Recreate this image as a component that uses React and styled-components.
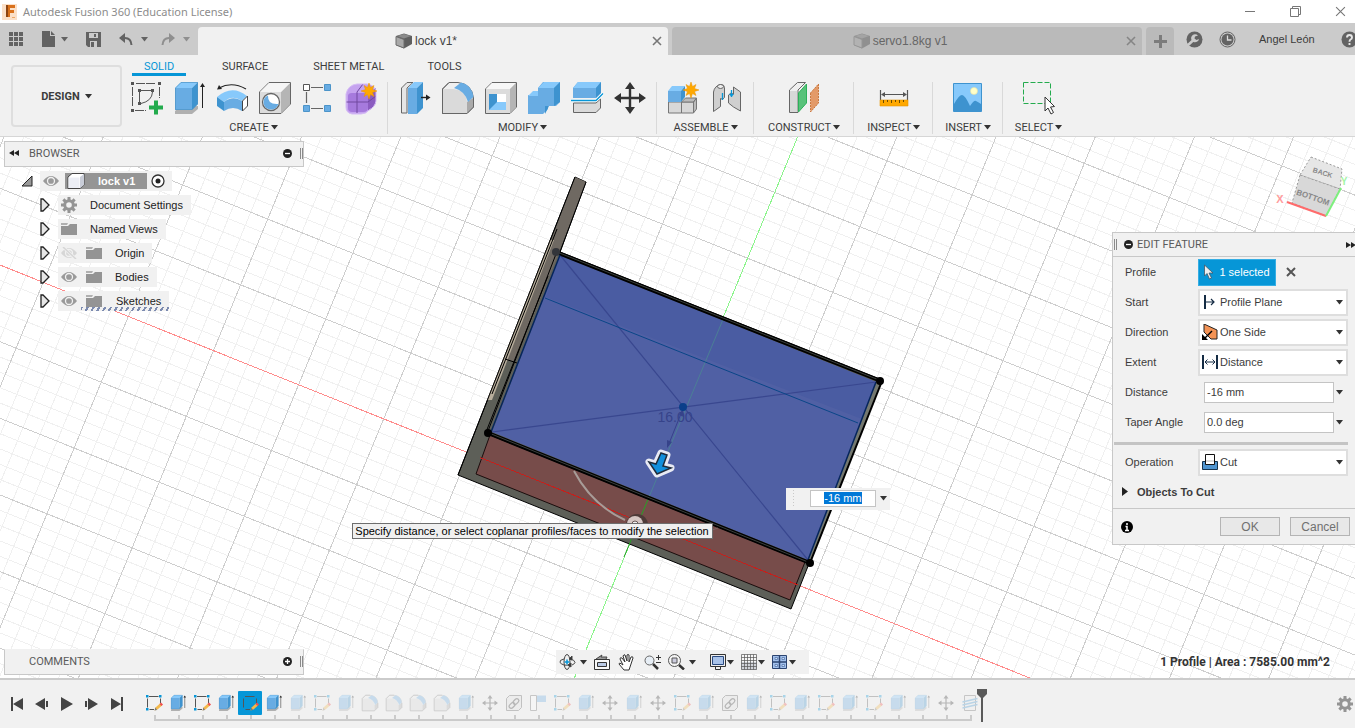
import { useEffect, useRef } from "react"
import styled, { createGlobalStyle } from "styled-components"

const GlobalStyle = createGlobalStyle`
    * {
        box-sizing: border-box;
    }
    body {
        margin: 0;
        overflow: hidden;
        font-family: "Liberation Sans", Arial, sans-serif;
        font-size: 11px;
        color: #3c3c3c;
    }
    button, input, select {
        font: inherit;
        color: inherit;
        margin: 0;
    }
    svg {
        display: block;
        flex: none;
    }
`

const Page = styled.div`
    height: 100vh;
    display: flex;
    flex-direction: column;
    background: #f1f1f1;
`

const PlainButton = styled.button`
    display: flex;
    align-items: center;
    justify-content: center;
    gap: ${(props) => props.$gap || 0}px;
    padding: 0;
    border: 0;
    background: none;
    cursor: pointer;
`

/* ---------- title bar ---------- */

const TitleBar = styled.header`
    height: 23px;
    flex: none;
    display: flex;
    align-items: center;
    gap: 6px;
    padding: 0 9px 0 2px;
    background: #fff;
    color: #8c8c8c;
    font-family: "Noto Sans", sans-serif;
    font-size: 11px;
`

const WindowButtons = styled.div`
    margin-left: auto;
    display: flex;
    align-items: center;
    gap: 34px;
`

/* ---------- document tabs ---------- */

const TabStrip = styled.div`
    height: 32px;
    flex: none;
    display: flex;
    align-items: stretch;
    gap: 4px;
    padding-top: 4px;
    background: #cbcbcb;
`

const QuickBar = styled.div`
    width: 194px;
    flex: none;
    display: flex;
    align-items: center;
    gap: 18px;
    padding: 0 0 4px 9px;
`

const UndoGroup = styled.div`
    display: flex;
    gap: 13px;
`

const DocTab = styled.div`
    flex: 1;
    display: flex;
    align-items: center;
    gap: 4px;
    padding: 0 6px;
    border-radius: 4px 4px 0 0;
    font-size: 12px;
    background: ${(props) => (props.$active ? "#f1f1f1" : "#bababa")};
    color: ${(props) => (props.$active ? "#444" : "#666")};
    > span {
        margin-left: -4px;
    }
    > :first-child {
        margin-left: auto;
    }
    > :last-child {
        margin-left: auto;
    }
`

const NewTab = styled(PlainButton)`
    width: 28px;
    border-radius: 4px 4px 0 0;
    background: #bababa;
`

const Account = styled.div`
    width: 177px;
    flex: none;
    display: flex;
    align-items: center;
    padding: 0 0 4px 8px;
    overflow: hidden;
    > * {
        flex: none;
    }
    > :nth-child(1) {
        margin: 0 16px 0 0;
        width: 17px;
    }
    > :nth-child(3) {
        margin: 0 26px 0 23px;
    }
`

/* ---------- ribbon ---------- */

const Ribbon = styled.div`
    height: 82px;
    flex: none;
    display: flex;
    border-bottom: 1px solid #d6d6d6;
    background: #f1f1f1;
    font-family: Roboto, sans-serif;
`

const Workspace = styled(PlainButton)`
    width: 111px;
    height: 62px;
    margin: 10px 7px 0 11px;
    border: 2px solid #dedede;
    border-radius: 4px;
    font-weight: 700;
`

const RibbonTabs = styled.nav`
    display: flex;
    height: 21px;
    padding-left: 3px;
    gap: 36px;
`

const RibbonTab = styled.button`
    height: 21px;
    min-width: ${(props) => (props.$active ? 54 : 34)}px;
    padding: 5px 0 0;
    border: 0;
    border-bottom: 3px solid ${(props) => (props.$active ? "#0696d7" : "transparent")};
    background: none;
    line-height: 13px;
    color: ${(props) => (props.$active ? "#0696d7" : "#3c3c3c")};
    &:nth-child(3) {
        margin-left: 9px;
    }
    &:nth-child(4) {
        margin-left: 7px;
    }
`

const RibbonGroups = styled.div`
    display: flex;
    margin-top: 6px;
`

const Group = styled.section`
    display: flex;
    flex-direction: column;
    align-items: center;
    justify-content: space-between;
    height: 52px;
    padding: 0 10px 0 11px;
    border-right: 1px solid #d9d9d9;
    &:first-child {
        padding-left: 1px;
    }
    &:last-child {
        border-right: 0;
    }
`

const GroupIcons = styled.div`
    display: flex;
    gap: 11px;
`

const GroupLabel = styled(PlainButton)`
    padding: 0 ${(props) => props.$inset}px;
    line-height: 13px;
`

/* ---------- viewport ---------- */

const Viewport = styled.main`
    flex: 1;
    min-height: 0;
    position: relative;
    display: flex;
    flex-direction: column;
    justify-content: space-between;
    background: #fff;
    overflow: hidden;
`

const Scene = styled.svg`
    position: absolute;
    inset: 0;
    width: 100%;
    height: 100%;
`

const Docks = styled.div`
    position: relative;
    display: flex;
    justify-content: space-between;
    align-items: flex-start;
    padding: 4px 0 0 4px;
`

const PanelBar = styled.div`
    width: 300px;
    height: 26px;
    display: flex;
    align-items: center;
    gap: 8px;
    padding: 0 0 2px 4px;
    border: 1px solid #c8c8c8;
    border-top-color: ${(props) => (props.$docked ? "#f1f1f1" : "#c8c8c8")};
    background: #f1f1f1;
    color: #5a5a5a;
    font-family: Roboto, sans-serif;
    > :nth-child(3) {
        margin-left: auto;
    }
`

const ArrowSlot = styled.span`
    width: 12px;
`

const Grip = styled.i`
    width: 3px;
    height: 11px;
    border: solid #8a8a8a;
    border-width: 0 1px;
`

const Tree = styled.ul`
    margin: 2px 0 0;
    padding: 0;
    list-style: none;
`

const TreeRow = styled.li`
    height: 24px;
    display: flex;
    align-items: center;
    gap: ${(props) => (props.$root ? 7 : 8)}px;
    padding-left: ${(props) => (props.$root ? 17 : 35)}px;
`

const TreeItem = styled.div`
    height: 20px;
    display: flex;
    align-items: center;
    padding-right: ${(props) => (props.$root ? 0 : 8)}px;
    background: #f1f1f1;
    color: #222;
    > button, > svg {
        width: 22px;
        margin-right: 3px;
    }
    > span {
        padding-left: 7px;
    }
`

const RootName = styled.span`
    height: 16px;
    width: 82px;
    display: flex;
    align-items: center;
    gap: 13px;
    background: #959595;
    color: #fff;
    font-weight: 700;
    ${TreeItem} > & {
        padding-left: 2px;
    }
`

const EditedName = styled.span`
    height: 20px;
    display: flex;
    align-items: center;
    gap: 14px;
    margin: 0 -8px 0 -2px;
    background: repeating-linear-gradient(120deg, #7c8bb0 0 2px, transparent 2px 5px) 0 100% / 100% 4px no-repeat;
    ${TreeItem} > & {
        padding: 0 8px 0 5px;
    }
`

/* ---------- edit feature ---------- */

const Dialog = styled.form`
    width: 243px;
    margin-top: 91px;
    border: solid #c8c8c8;
    border-width: 1px 0 1px 1px;
    background: #f1f1f1;
`

const DialogTitle = styled.div`
    height: 24px;
    display: flex;
    align-items: center;
    gap: 4px;
    padding-left: 1px;
    border-bottom: 1px solid #c8c8c8;
    font-family: Roboto, sans-serif;
    color: #5a5a5a;
    > :nth-child(2) {
        margin-left: 3px;
    }
    > :last-child {
        margin: 0 -1px 0 auto;
    }
`

const Field = styled.div`
    height: 30px;
    display: grid;
    grid-template-columns: 73px minmax(0, 1fr);
    align-items: center;
    padding: 0 7px 0 12px;
`

const SelectBox = styled.div`
    height: 27px;
    display: flex;
    align-items: center;
    gap: 2px;
    padding: 0 3px 0 2px;
    border: 2px solid #dedede;
    background: #fff;
    select {
        flex: 1;
        min-width: 0;
        padding: 0;
        border: 0;
        outline: 0;
        appearance: none;
        background: none;
    }
`

const ProfileBox = styled.div`
    display: flex;
    align-items: center;
    gap: 10px;
`

const Selected = styled(PlainButton)`
    width: 78px;
    height: 27px;
    border: 1px solid #35aee4;
    background: #0696d7;
    color: #fff;
`

const ValueBox = styled.div`
    display: flex;
    align-items: center;
    gap: 2px;
    padding: 0 5px 0 6px;
    input {
        flex: 1;
        min-width: 0;
        height: 21px;
        padding: 0 2px;
        border: 1px solid #c4c4c4;
        outline: 0;
        background: #fff;
    }
`

const Separator = styled.hr`
    height: 3px;
    margin: 5px 7px 2px 1px;
    border: 0;
    background: #c4c4c4;
`

const Expander = styled.button`
    height: 31px;
    display: flex;
    align-items: center;
    gap: 9px;
    padding: 0 9px 2px;
    border: 0;
    background: none;
    font-weight: 700;
`

const DialogFooter = styled.div`
    height: 36px;
    display: flex;
    align-items: center;
    gap: 10px;
    padding: 0 5px 0 8px;
    border-top: 1px solid #c8c8c8;
    svg {
        margin-right: auto;
    }
    button {
        width: 60px;
        height: 19px;
        padding: 0;
        border: 1px solid #b4b4b4;
        background: #e8e8e8;
        color: #707070;
        font-size: 12px;
        line-height: 16px;
    }
`

/* ---------- things floating over the model ---------- */

const DimensionBox = styled.div`
    position: absolute;
    left: 58%;
    top: 351px;
    width: 104px;
    height: 22px;
    display: flex;
    align-items: center;
    gap: 4px;
    padding: 0 3px 2px 6px;
    background: #f1f1f1;
    i {
        width: 4px;
        height: 18px;
        margin-right: 10px;
        background: radial-gradient(#c9c9c9 1px, transparent 1px) 0 0 / 3px 3px;
    }
    input {
        width: 66px;
        height: 17px;
        padding: 0;
        border: 1px solid #c4c4c4;
        outline: 0;
        background: #fff;
        text-align: center;
    }
    input::selection {
        background: #0078d7;
        color: #fff;
    }
`

const Hint = styled.div`
    position: absolute;
    left: 26%;
    top: 386px;
    padding: 0 3px 0 2px;
    border: 1px solid #6e6e6e;
    background: #f0f0f0;
    color: #000;
    font-size: 11px;
    line-height: 14px;
    white-space: nowrap;
`

const BottomDock = styled.div`
    position: relative;
    display: grid;
    grid-template-columns: 1fr auto 1fr;
    align-items: center;
    padding: 0 0 3px 4px;
`

const NavBar = styled.div`
    height: 24px;
    display: flex;
    align-items: center;
    margin-left: 6px;
    padding: 0 13px 0 3px;
    gap: 7px;
    background: #f1f1f1;
    > :nth-child(6) {
        margin-left: 6px;
    }
`

const Status = styled.output`
    padding-right: 25px;
    text-align: right;
    font-family: Roboto, sans-serif;
    font-size: 12px;
    font-weight: 700;
    color: #333;
`

/* ---------- timeline ---------- */

const Timeline = styled.footer`
    height: 50px;
    flex: none;
    display: flex;
    align-items: flex-start;
    border-top: 2px solid #cbcbcb;
    background: #f1f1f1;
`

const Transport = styled.div`
    width: 142px;
    flex: none;
    display: flex;
    gap: 9px;
    padding: 17px 0 0 9px;
`

const Track = styled.div`
    padding-top: 11px;
`

const Features = styled.ol`
    display: flex;
    margin: 0;
    padding: 0;
    list-style: none;
    li::after {
        content: "";
        display: block;
        width: 2px;
        height: 4px;
        margin-left: 12px;
        background: #cbcbcb;
    }
`

const Feature = styled(PlainButton)`
    width: 24px;
    height: 24px;
    border-radius: 1px;
    background: ${(props) => (props.$current ? "#0696d7" : "none")};
    svg {
        opacity: ${(props) => (props.$later ? 0.3 : 1)};
    }
`

const Rail = styled.div`
    height: 2px;
    margin: 0 10px 0 12px;
    background: #cbcbcb;
`

const Marker = styled.svg`
    margin: 9px 0 0 -6px;
`

const SettingsButton = styled(PlainButton)`
    margin: 16px 2px 0 auto;
`

/* ---------- small icons ---------- */

const Caret = ({ color = "#333" }) => (
    <svg width="7" height="5" viewBox="0 0 7 5">
        <path d="M0 0h7L3.5 4.5z" fill={color} />
    </svg>
)

const CloseX = ({ size = 10, color = "#777", width = 1.6 }) => (
    <svg width={size} height={size} viewBox="0 0 10 10">
        <path d="M1 1l8 8M9 1l-8 8" stroke={color} strokeWidth={width} />
    </svg>
)

const DocCube = ({ faded }) => (
    <svg width="20" height="16" viewBox="0 0 20 16" opacity={faded ? 0.45 : 1}>
        <path d="M1 3l8-2.500L17 3v8l-8 4.500L1 12z" fill="#5f5f5f" />
        <path d="M1 3.500l8 3v8.500L1 12z" fill="#a9a9a9" stroke="#6c6c6c" />
        <path d="M2 3l7-2 7 2-7 2.500z" fill="#8a8a8a" />
    </svg>
)

const Eye = ({ off }) => (
    <svg width="16" height="12" viewBox="0 0 16 12" opacity={off ? 0.3 : 1}>
        <path d="M0 6Q8-4 16 6Q8 16 0 6z" fill="#9a9a9a" />
        <circle cx="8" cy="6" r="3.500" fill="none" stroke="#f1f1f1" strokeWidth="1.300" />
        {off && <path d="M2 0l13 12" stroke="#f1f1f1" strokeWidth="3" />}
        {off && <path d="M2 0l13 12" stroke="#9a9a9a" strokeWidth="1.500" />}
    </svg>
)

const Folder = () => (
    <svg width="16" height="14" viewBox="0 0 16 14">
        <path d="M0 4h7l2-2h7v11H0z" fill="#949494" />
        <path d="M0 1h7L6 3H0z" fill="#b0b0b0" />
    </svg>
)

const Gear = ({ size = 16, color = "#949494" }) => (
    <svg width={size} height={size} viewBox="0 0 16 16">
        <circle cx="8" cy="8" r="4.300" fill="none" stroke={color} strokeWidth="3" />
        {[0, 45, 90, 135].map((a) => (
            <path key={a} d="M8 0v3.500M8 12.500V16" stroke={color} strokeWidth="3" transform={`rotate(${a} 8 8)`} />
        ))}
    </svg>
)

const Expand = () => (
    <svg width="11" height="14" viewBox="0 0 11 14">
        <path d="M2 1h2l6 6-6 6H2z" fill="#e6e6e6" stroke="#222" strokeWidth="1.300" />
    </svg>
)

const RoundSign = ({ plus }) => (
    <svg width="9" height="9" viewBox="0 0 9 9">
        <circle cx="4.500" cy="4.500" r="4.500" fill="#222" />
        <path d={plus ? "M2 4.500h5M4.500 2v5" : "M2 4.500h5"} stroke="#fff" strokeWidth="1.300" />
    </svg>
)

const DoubleArrow = ({ right }) => (
    <svg width="10" height="6" viewBox="0 0 10 6">
        <path
            d="M5 0v6L0 3zM10 0v6L5 3z"
            fill="#222"
            transform={right ? "rotate(180 5 3)" : undefined}
        />
    </svg>
)

/* ---------- command icons, drawn on a 32 grid ---------- */

const Star = ({ x, y }) => (
    <path
        transform={`translate(${x} ${y})`}
        fill="#ffa800"
        stroke="#e89200"
        strokeWidth=".5"
        d="M0-8l1.500 4.500L5-5.500 3.500-1.500 8 0 3.500 1.500 5 5.500 1.500 3.500 0 8l-1.500-4.500L-5 5.500l1.500-4L-8 0l4.500-1.500L-5-5.500l3.500 2z"
    />
)

const commands = {
    sketch: (
        <>
            <path d="M6 1.500h20M2.500 5v20M5 28.500h11M29.500 5v11" stroke="#555" strokeDasharray="9 1" fill="none" />
            <path d="M1 0h3v3H1zM28 0h3v3h-3zM1 27h3v3H1zM8 7h3v3H8zM21 7h3v3h-3zM8 20h3v3H8z" fill="#555" />
            <path d="M11 8.500h10M9.500 10v10M11 21.500Q22 19 22.500 10" stroke="#555" fill="none" />
            <path d="M19 25.500h14M26 18.500v14" stroke="#23ab4d" strokeWidth="4" />
        </>
    ),
    extrude: (
        <>
            <path d="M2 29l5-4 18-1v3l-6 5H2z" fill="#b0b0b0" />
            <path d="M2 6h17v22H2z" fill="#68ace3" />
            <path d="M2 6l6-6h17l-6 6z" fill="#87c9fb" />
            <path d="M19 6l6-6v22l-6 6z" fill="#3e93cf" />
            <path d="M2.500 6l5.500-5.500h16.500V22L19 27.500H2.500z" fill="none" stroke="#4f93c4" strokeWidth=".7" />
            <path d="M29.500 3v23" stroke="#222" />
            <path d="M27 5l2.500-4L32 5z" fill="#222" />
        </>
    ),
    revolve: (
        <>
            <path d="M1 15Q16 2 31 14l-5 5Q16 12 8 20z" fill="#87c9fb" />
            <path d="M1 15l7 5v9l-7-5z" fill="#3e93cf" />
            <path d="M8 20q9-7 18-1v10q-9-6-18 0z" fill="#68ace3" />
            <path d="M26.500 19l5-5v10l-5 5z" fill="#fff" stroke="#444" />
            <path d="M3 6Q16-1 30 7" stroke="#222" strokeWidth="1.200" fill="none" />
            <path d="M1 7.500l2-4.500 3 4z" fill="#222" />
        </>
    ),
    hole: (
        <>
            <path d="M.5 10L10 .5h21.500V22L22 31.500H.5z" fill="#dcdcdc" stroke="#666" />
            <path d="M22 10l9-9v21l-9 9z" fill="#b5b5b5" />
            <path d="M1 10h21l9-9H10z" fill="#f5f5f5" />
            <circle cx="12" cy="20" r="8.500" fill="#fff" stroke="#666" strokeWidth="1.300" />
            <path d="M9 13.500q-5 2-4.500 7.500 1 6 7.500 6.500 5.500 0 7.500-5.500-11 1-10.500-8.500z" fill="#68ace3" />
        </>
    ),
    pattern: (
        <>
            <path d="M9 5.500h12M4.500 10v11M9 26.500h12" stroke="#666" strokeWidth="1.200" />
            <path d="M1.500 2.500h6v6h-6z" fill="#fff" stroke="#555" />
            <path d="M22.500 2.500h6v6h-6zM1.500 23.500h6v6h-6zM22.500 23.500h6v6h-6z" fill="#68ace3" stroke="#4c94c9" />
        </>
    ),
    form: (
        <>
            <path d="M1 12Q3 3 12 2h10q8 1 9 8v9q-1 6-7 9-3 4-8 4H7q-6-1-6-7z" fill="#c5a3ef" />
            <path d="M23 11q5-2 8-5v14q-1 5-8 9z" fill="#8b5cc0" />
            <path d="M3 14q0-3 4-3h12q4 0 4 4v11q0 4-5 4H7q-4 0-4-4z" fill="#a67add" />
            <path d="M12 10v21M1 20h22l8-6M12 10l6-8" stroke="#70489f" fill="none" />
            <path d="M1 12Q3 3 12 2h10q8 1 9 8v9q-1 6-7 9-3 4-8 4H7q-6-1-6-7z" fill="none" stroke="#d5bcf5" />
            <Star x={24} y={9} />
        </>
    ),
    pressPull: (
        <>
            <path d="M2.500 6L8 .5h6L8 6v25H2.500z" fill="#e6e6e6" stroke="#666" />
            <path d="M9 6h9v26H9z" fill="#68ace3" />
            <path d="M9 6l6-6h9l-6 6z" fill="#87c9fb" />
            <path d="M18 6l6-6v26l-6 6z" fill="#3e93cf" />
            <path d="M22 15.500h6" stroke="#222" strokeWidth="1.400" />
            <path d="M27 12.500l4.500 3-4.500 3z" fill="#222" />
        </>
    ),
    fillet: (
        <>
            <path d="M.5 7L7 .5h9Q30 2 31.500 16v9L25 31.500H.5z" fill="#efefef" stroke="#666" />
            <path d="M1 7h10q13 1 14 13v11H1z" fill="#dadada" />
            <path d="M25 20l6-4v9l-6 6z" fill="#aaa" />
            <path d="M12 6l7-5.500Q30 3 31.500 15L26 20Q23 9 12 6z" fill="#68ace3" />
            <path d="M.5 7L7 .5h9M31.500 16v9L25 31.500H.5V7" fill="none" stroke="#666" />
        </>
    ),
    shell: (
        <>
            <path d="M.5 7L7 .5h24.500V25L25 31.500H.5z" fill="#dcdcdc" stroke="#666" />
            <path d="M1 7h24l6-6H7z" fill="#f7f7f7" />
            <path d="M25 7l6-6v24l-6 6z" fill="#b5b5b5" />
            <path d="M4 12h17v16H4z" fill="#fff" />
            <path d="M4 12h8v16H4z" fill="#3e93cf" />
            <path d="M4 28l8-8h9v8z" fill="#87c9fb" />
        </>
    ),
    combine: (
        <>
            <path d="M0 13h10V6l5-6h17v20l-4 4h-8v3l-5 5H0z" fill="#68ace3" />
            <path d="M10 6l6-6h16l-6 6zM0 14l5-5h5v5z" fill="#87c9fb" />
            <path d="M26 6l6-6v20l-6 4zM17 24h4l-4 8z" fill="#3e93cf" />
        </>
    ),
    split: (
        <>
            <path d="M2 6l5-6h23v11l-5 5H2z" fill="#68ace3" />
            <path d="M2 6l5-6h23l-5 6z" fill="#87c9fb" />
            <path d="M25 6l5-6v11l-5 5z" fill="#3e93cf" />
            <path d="M2.500 21v9.500H25l4.500-4.500v-9L25 21z" fill="#dadada" stroke="#666" />
            <path d="M0 18.500h25l7-7" stroke="#fff" strokeWidth="3" fill="none" />
            <path d="M0 18.500h25l7-7" stroke="#0696d7" strokeWidth="1.300" fill="none" />
        </>
    ),
    move: (
        <>
            <path d="M3 16h26M16 3v26" stroke="#333" strokeWidth="2.400" />
            <path d="M16 0l5 7H11zM16 32l5-7H11zM0 16l7-5v10zM32 16l-7-5v10z" fill="#333" />
        </>
    ),
    component: (
        <>
            <path d="M.5 20h13v11H.5zM13.500 20h12v11h-12z" fill="#d8d8d8" stroke="#777" />
            <path d="M13.500 20l4-4h11l-3 4zM25.500 20l3-4v11l-3 4z" fill="#bbb" stroke="#777" />
            <path d="M0 9h13v11H0z" fill="#68ace3" />
            <path d="M0 9l4-5h13l-4 5z" fill="#87c9fb" />
            <path d="M13 9l4-5v11l-4 5z" fill="#3e93cf" />
            <Star x={23} y={8} />
        </>
    ),
    joint: (
        <>
            <path d="M2.500 10q1-6 7-7.500 4 0 4 3v10q-2 3-4 1v8l-7 5z" fill="#cfcfcf" stroke="#666" />
            <path d="M22.500 5l7 5v19l-7-4-5-4v-8q2-3 5-1z" fill="#cfcfcf" stroke="#666" />
            <ellipse cx="9.500" cy="4.500" rx="3" ry="2" fill="#eee" stroke="#666" />
            <path d="M11.500 11v7M20.500 8v7" stroke="#0696d7" strokeWidth="1.300" />
            <path d="M18 12h5l-2.500 3z" fill="#0696d7" />
        </>
    ),
    plane: (
        <>
            <path d="M1.500 8l8-7.500h8L10 8v22.500H1.500z" fill="#efefef" stroke="#666" />
            <path d="M2 9h7v21H2z" fill="#d8d8d8" />
            <path d="M10.500 11l8-9v19l-8 9z" fill="#58c27a" stroke="#2eb05a" />
            <path d="M22.500 11l8-9v19l-8 9z" fill="#e39a68" stroke="#c9763c" strokeDasharray="2 1" />
        </>
    ),
    measure: (
        <>
            <path d="M2.500 8v10M29.500 8v10M4 12.500h24" stroke="#555" strokeWidth="1.200" />
            <path d="M3 12.500l4-2.500v5zM29 12.500l-4-2.500v5z" fill="#555" />
            <path d="M2 18h28v6H2z" fill="#ffa800" stroke="#e59600" strokeWidth=".6" />
            <path d="M5.500 18v3M9.500 18v2M13.500 18v3M17.500 18v2M21.500 18v3M25.500 18v2" stroke="#6b4a00" />
        </>
    ),
    image: (
        <>
            <path d="M1.500 1.500h28v28h-28z" fill="#87c9fb" stroke="#3e93cf" />
            <path d="M2 22q5-9 8-9t8 11q4-6 6-5t5 3v7H2z" fill="#3e93cf" />
            <circle cx="22" cy="9" r="3.500" fill="#ffffc8" stroke="#e6dfa2" strokeWidth=".6" />
        </>
    ),
    select: (
        <>
            <path d="M.5.500h27v21H.5z" fill="none" stroke="#23ab4d" strokeDasharray="5 2" />
            <path d="M22 15v14l3-3 3 6 2.500-1.500-3-5.500 4-.5z" fill="#fff" stroke="#333" />
        </>
    ),
    timelineSketch: (
        <>
            <path d="M6 3h19M3 7v18M7 29h9M29 7v9" stroke="#555" strokeWidth="2" fill="none" />
            <path d="M0 0h5v5H0zM26 0h5v5h-5zM0 26h5v5H0z" fill="#0696d7" />
            <path d="M17 31l2-6 9-8 4 4-9 8z" fill="#f3b84a" />
            <path d="M27 18l3-3 4 4-3 3z" fill="#f04e4e" />
            <path d="M17 31l2-6 3 5z" fill="#777" />
        </>
    ),
    link: (
        <>
            <path d="M1 7l6-6h24v24l-6 6H1z" fill="#e2e2e2" stroke="#555" strokeWidth="2" />
            <g fill="none" stroke="#333" strokeWidth="2.500" transform="rotate(-45 16 17)">
                <rect x="4" y="13" width="13" height="8" rx="4" />
                <rect x="15" y="13" width="13" height="8" rx="4" />
            </g>
        </>
    ),
    align: (
        <>
            <path d="M1 1h12v30H1z" fill="#fff" stroke="#666" strokeWidth="2" />
            <path d="M14 1h18v13H14z" fill="#68ace3" />
        </>
    ),
    thread: (
        <>
            <path d="M5 1h22v30H5z" fill="#eee" stroke="#666" strokeWidth="2" />
            <path d="M1 14L31 7M1 20l30-7M1 26l30-7" stroke="#3e93cf" strokeWidth="3" />
        </>
    ),
}

const CommandIcon = ({ name, size = 32 }) => (
    <svg width={size} height={size} viewBox="0 0 32 32" overflow="visible">
        {commands[name]}
    </svg>
)

/* ---------- data ---------- */

const ribbonGroups = [
    { label: "CREATE", icons: ["sketch", "extrude", "revolve", "hole", "pattern", "form"], inset: 3 },
    { label: "MODIFY", icons: ["pressPull", "fillet", "shell", "combine", "split", "move"], inset: 3 },
    { label: "ASSEMBLE", icons: ["component", "joint"], inset: 3 },
    { label: "CONSTRUCT", icons: ["plane"], inset: 3 },
    { label: "INSPECT", icons: ["measure"], inset: 2 },
    { label: "INSERT", icons: ["image"], inset: 1 },
    { label: "SELECT", icons: ["select"], inset: 1 },
]

const short = {
    s: "timelineSketch",
    e: "extrude",
    f: "fillet",
    m: "move",
    l: "link",
    a: "align",
    t: "thread",
}
const features = "seseseeseffffemlasemem" + "selesesesee" + "mt"
const current = 4

const range = (from, to) => Array.from({ length: to - from + 1 }, (_, i) => from + i)

/* ---------- model ---------- */

const GridLines = () => (
    <g shapeRendering="crispEdges">
        {[false, true].map((major) => (
            <g key={String(major)} stroke={major ? "#cecece" : "#f0f0f0"}>
                {range(-45, 35)
                    .filter((k) => (k % 5 === 0) === major)
                    .map((k) => {
                        const y = 265 + k * 15.33
                        return <line key={`a${k}`} x1="0" y1={y} x2="1355" y2={y + 543.4} />
                    })}
                {range(-42, 40)
                    .filter((k) => (k % 5 === 0) === major)
                    .map((k) => {
                        const x = 798 + k * 19.84
                        return <line key={`b${k}`} x1={x} y1="136" x2={x - 224} y2="679" />
                    })}
            </g>
        ))}
        <line x1="0" y1="265" x2="1355" y2="808.400" stroke="#ff8c8c" />
        <line x1="798" y1="136" x2="574" y2="679" stroke="#8cf58c" />
    </g>
)

const Model = () => (
    <g>
        <path d="M575 177l11 5-26 70 322 128-91 229-333-134z" fill="#5d5f58" stroke="#000" />
        <path d="M575 177l11 5-30 78-42 102-8-3z" fill="#6f6962" />
        <path d="M550 240h4l-62 160h-5z" fill="#b8ae9c" />
        <path d="M575 177L458 475M586 182l-26 70M557 229l-65 165M505 359l12 4M548 276l-62 156" stroke="#000" fill="none" />
        <path d="M882 381l-72 181-4-2 70-178z" fill="#74786f" />
        <path d="M490 435l315 127-15 38-314-126z" fill="#774c4a" stroke="#1b0d0d" />
        <path d="M480 457.500L798 585" stroke="#c4201c" shapeRendering="crispEdges" />
        <path d="M560 255l316 127-68 178-316-128z" fill="#5060a4" />
        <path d="M560 255l316 127-14 37L546 297z" fill="#4a5ca2" />
        <path d="M649 497L624 557" stroke="#25a325" />
        <path d="M724 317L649 497" stroke="#4b7f96" />
        <path d="M560 255l248 305M492 432l384-50" stroke="#39478f" strokeWidth="1.200" />
        <path d="M545 298l313 125" stroke="#0a4688" />
        <path d="M556 252l325 129M488 433l322 130" stroke="#000" strokeWidth="4" />
        <path d="M557 252l322 128M489 433l319 129" stroke="#3c413d" />
        <path d="M882 381l-72 182" stroke="#000" strokeWidth="2" />
        <path d="M876 382l-68 178M560 255l-69 177" stroke="#06265c" strokeWidth="1.500" />
        <path d="M556 254l-68 177" stroke="#000" />
        <text x="675" y="422" textAnchor="middle" fontSize="14" fill="#36438a">16.00</text>
        <path d="M682 411l-14 35" stroke="#36438a" />
        <path d="M683 409l1 8-5-2zM667 448l0-8 5 2z" fill="#36438a" />
        <circle cx="683" cy="407" r="4" fill="#0b3f8a" />
        <circle cx="556" cy="252" r="4" fill="#33353a" />
        <circle cx="880" cy="381" r="4" />
        <circle cx="810" cy="563" r="4" />
        <circle cx="488" cy="433" r="4" />
        <path d="M574 471q18 34 51 49" stroke="#a89c98" strokeWidth="2" fill="none" />
        <path d="M712 530l6-2" stroke="#7d6462" strokeWidth="1" />
        <circle cx="637" cy="525" r="11" fill="#4d3a38" />
        <circle cx="635" cy="524" r="8" fill="#d5c6c3" />
        <circle cx="635" cy="524" r="3" fill="#eee" stroke="#6a5a58" />
        <path
            d="M661 453l6 2-4 11 8 2-14 6-8-12 7 2z"
            fill="#0a8ddd"
            stroke="#e8eaf4"
            strokeWidth="7"
            strokeLinejoin="round"
        />
        <path d="M661 453l6 2-4 11 8 2-14 6-8-12 7 2z" fill="#118fdc" stroke="#1f2c3c" strokeWidth="1.500" />
    </g>
)

const ViewCube = () => (
    <g fontWeight="700" textAnchor="middle">
        <path d="M1311 157l31 12-2 20-40-14z" fill="#e6e6e6" stroke="#999" strokeDasharray="2 2" />
        <path d="M1300 175l40 14-14 27-34-13z" fill="#d8d8d8" stroke="#999" strokeDasharray="2 2" />
        <path d="M1287 202l39 14" stroke="#ff6b6b" strokeWidth="2" />
        <path d="M1326 216l15-28" stroke="#7ef07e" strokeWidth="2" />
        <text fontSize="7" fill="#888" transform="translate(1322 175) rotate(17)">BACK</text>
        <text fontSize="8" fill="#888" transform="translate(1312 200) rotate(19)">BOTTOM</text>
        <text x="1280" y="203" fontSize="11" fill="#ff9d9d">X</text>
        <text x="1344" y="185" fontSize="10" fill="#a5f5a5">Y</text>
    </g>
)

/* ---------- sections ---------- */

const Header = () => (
    <TitleBar>
        <svg width="15" height="16" viewBox="0 0 15 16">
            <path d="M0 0h15v16H0z" fill="#fbe0c8" />
            <path d="M4 1h9v3H8v2h4v3H8v4H4z" fill="#d9711c" />
            <path d="M4 1h2v12H4z" fill="#8c4513" />
            <path d="M10 13h3v1h-3z" fill="#eda868" />
        </svg>
        <span>Autodesk Fusion 360 (Education License)</span>
        <WindowButtons>
            <PlainButton aria-label="Minimize">
                <svg width="11" height="11" viewBox="0 0 11 11">
                    <path d="M0 5.500h10" stroke="#777" />
                </svg>
            </PlainButton>
            <PlainButton aria-label="Restore">
                <svg width="11" height="11" viewBox="0 0 11 11">
                    <path d="M.5 2.500h8v8h-8zM2.500 2.500v-2h8v8h-2" stroke="#777" fill="none" />
                </svg>
            </PlainButton>
            <PlainButton aria-label="Close">
                <CloseX size={11} width={1} />
            </PlainButton>
        </WindowButtons>
    </TitleBar>
)

const Tabs = () => (
    <TabStrip>
        <QuickBar>
            <PlainButton aria-label="Data panel">
                <svg width="14" height="14" viewBox="0 0 14 14">
                    <path d="M0 0h4v4H0zM5 0h4v4H5zM10 0h4v4h-4zM0 5h4v4H0zM5 5h4v4H5zM10 5h4v4h-4zM0 10h4v4H0zM5 10h4v4H5zM10 10h4v4h-4z" fill="#636363" />
                </svg>
            </PlainButton>
            <PlainButton $gap={6} aria-label="File">
                <svg width="14" height="16" viewBox="0 0 14 16">
                    <path d="M1 0h8v5h5v11H1z" fill="#636363" />
                    <path d="M10 0l4 4h-4z" fill="#636363" />
                </svg>
                <Caret color="#636363" />
            </PlainButton>
            <PlainButton aria-label="Save">
                <svg width="15" height="15" viewBox="0 0 15 15">
                    <path d="M0 0h15v15H2l-2-2z" fill="#636363" />
                    <path d="M3 1h9v5H3zM4 9h7v6H4z" fill="#cbcbcb" />
                    <path d="M8 2h2v3H8zM5 10h3v5H5z" fill="#636363" />
                </svg>
            </PlainButton>
            <UndoGroup>
                <PlainButton $gap={8} aria-label="Undo">
                    <svg width="14" height="13" viewBox="0 0 14 13">
                        <path d="M1 5h5q6 0 6.500 7" stroke="#636363" strokeWidth="2" fill="none" />
                        <path d="M0 5l6-5v10z" fill="#636363" />
                    </svg>
                    <Caret color="#636363" />
                </PlainButton>
                <PlainButton $gap={8} aria-label="Redo">
                    <svg width="14" height="13" viewBox="0 0 14 13">
                        <path d="M13 5H8q-6 0-6.500 7" stroke="#8f8f8f" strokeWidth="2" fill="none" />
                        <path d="M14 5L8 0v10z" fill="#8f8f8f" />
                    </svg>
                    <Caret color="#8f8f8f" />
                </PlainButton>
            </UndoGroup>
        </QuickBar>
        <DocTab $active>
            <DocCube />
            <span>lock v1*</span>
            <PlainButton aria-label="Close lock v1">
                <CloseX />
            </PlainButton>
        </DocTab>
        <DocTab>
            <DocCube faded />
            <span>servo1.8kg v1</span>
            <PlainButton aria-label="Close servo1.8kg v1">
                <CloseX color="#858585" />
            </PlainButton>
        </DocTab>
        <NewTab aria-label="New design">
            <svg width="13" height="13" viewBox="0 0 13 13">
                <path d="M0 6.500h13M6.500 0v13" stroke="#7c7c7c" strokeWidth="3" />
            </svg>
        </NewTab>
        <Account>
            <PlainButton aria-label="Extensions">
                <svg width="17" height="17" viewBox="0 0 17 17">
                    <circle cx="8.500" cy="8.500" r="8" fill="#636363" />
                    <path d="M1 15l6.500-6" stroke="#cbcbcb" strokeWidth="2.600" />
                    <path d="M12 4.500A4 4 0 1 0 13 8l-2.500 1-2-1.500.5-2z" fill="#cbcbcb" />
                </svg>
            </PlainButton>
            <PlainButton aria-label="Job status">
                <svg width="17" height="17" viewBox="0 0 17 17">
                    <circle cx="8.500" cy="8.500" r="7.500" fill="none" stroke="#636363" />
                    <circle cx="8.500" cy="8.500" r="6" fill="#636363" />
                    <path d="M8.500 4.500v4.500h4" stroke="#ddd" strokeWidth="1.300" fill="none" />
                </svg>
            </PlainButton>
            <span>Angel León</span>
            <PlainButton aria-label="Help">
                <svg width="17" height="17" viewBox="0 0 17 17">
                    <circle cx="8.500" cy="8.500" r="8" fill="#636363" />
                    <path d="M6 6.500q0-2.500 2.500-2.500T11 6.500q0 1.300-1.500 2-1 .7-1 2.200M8.500 12v2" stroke="#e6e6e6" strokeWidth="1.900" fill="none" />
                </svg>
            </PlainButton>
        </Account>
    </TabStrip>
)

const Toolbar = () => (
    <Ribbon>
        <Workspace $gap={5}>
            DESIGN <Caret />
        </Workspace>
        <div>
            <RibbonTabs>
                <RibbonTab $active>SOLID</RibbonTab>
                <RibbonTab>SURFACE</RibbonTab>
                <RibbonTab>SHEET METAL</RibbonTab>
                <RibbonTab>TOOLS</RibbonTab>
            </RibbonTabs>
            <RibbonGroups>
                {ribbonGroups.map((group) => (
                    <Group key={group.label}>
                        <GroupIcons>
                            {group.icons.map((name) => (
                                <PlainButton key={name} aria-label={name}>
                                    <CommandIcon name={name} />
                                </PlainButton>
                            ))}
                        </GroupIcons>
                        <GroupLabel $gap={2} $inset={group.inset}>
                            {group.label} <Caret />
                        </GroupLabel>
                    </Group>
                ))}
            </RibbonGroups>
        </div>
    </Ribbon>
)

const Browser = () => (
    <div>
        <PanelBar>
            <ArrowSlot>
                <DoubleArrow />
            </ArrowSlot>
            <span>BROWSER</span>
            <PlainButton aria-label="Collapse browser">
                <RoundSign />
            </PlainButton>
            <Grip />
        </PanelBar>
        <Tree>
            <TreeRow $root>
                <svg width="12" height="12" viewBox="0 0 12 12">
                    <path d="M11 1v10H1z" fill="#999" stroke="#222" />
                </svg>
                <TreeItem $root>
                    <PlainButton aria-label="Toggle lock v1">
                        <Eye />
                    </PlainButton>
                    <RootName>
                        <svg width="18" height="16" viewBox="0 0 18 16">
                            <path d="M1 4l4-3.500h12V12l-4 3.500H1z" fill="#fff" stroke="#444" />
                            <path d="M13 4l4-3v11l-4 3z" fill="#c9cdd8" />
                            <path d="M1.500 4.500h11V15h-11z" fill="#eceef5" />
                        </svg>
                        lock v1
                    </RootName>
                    <svg width="14" height="14" viewBox="0 0 14 14">
                        <circle cx="7" cy="7" r="6" fill="#fff" stroke="#333" strokeWidth="1.300" />
                        <circle cx="7" cy="7" r="2.500" fill="#222" />
                    </svg>
                </TreeItem>
            </TreeRow>
            <TreeRow>
                <Expand />
                <TreeItem>
                    <Gear />
                    <span>Document Settings</span>
                </TreeItem>
            </TreeRow>
            <TreeRow>
                <Expand />
                <TreeItem>
                    <Folder />
                    <span>Named Views</span>
                </TreeItem>
            </TreeRow>
            <TreeRow>
                <Expand />
                <TreeItem>
                    <PlainButton aria-label="Toggle Origin">
                        <Eye off />
                    </PlainButton>
                    <Folder />
                    <span>Origin</span>
                </TreeItem>
            </TreeRow>
            <TreeRow>
                <Expand />
                <TreeItem>
                    <PlainButton aria-label="Toggle Bodies">
                        <Eye />
                    </PlainButton>
                    <Folder />
                    <span>Bodies</span>
                </TreeItem>
            </TreeRow>
            <TreeRow>
                <Expand />
                <TreeItem>
                    <PlainButton aria-label="Toggle Sketches">
                        <Eye />
                    </PlainButton>
                    <EditedName>
                        <Folder />
                        Sketches
                    </EditedName>
                </TreeItem>
            </TreeRow>
        </Tree>
    </div>
)

const SelectField = ({ id, label, value, children }) => (
    <Field>
        <label htmlFor={id}>{label}</label>
        <SelectBox>
            <svg width="16" height="16" viewBox="0 0 16 16">
                {children}
            </svg>
            <select id={id} defaultValue={value}>
                <option>{value}</option>
            </select>
            <Caret />
        </SelectBox>
    </Field>
)

const ValueField = ({ id, label, value }) => (
    <Field>
        <label htmlFor={id}>{label}</label>
        <ValueBox>
            <input id={id} defaultValue={value} />
            <Caret />
        </ValueBox>
    </Field>
)

const EditFeature = () => (
    <Dialog onSubmit={(e) => e.preventDefault()}>
        <DialogTitle>
            <Grip />
            <RoundSign />
            EDIT FEATURE
            <DoubleArrow right />
        </DialogTitle>
        <Field>
            <span>Profile</span>
            <ProfileBox>
                <Selected type="button" $gap={5}>
                    <svg width="10" height="16" viewBox="0 0 10 16">
                        <path d="M.5 1v11l2.500-2.500L5.500 15l2-1-2.500-5h4z" fill="#eee" stroke="#456" strokeWidth=".8" />
                    </svg>
                    1 selected
                </Selected>
                <PlainButton type="button" aria-label="Clear profile">
                    <CloseX color="#555" width={2} />
                </PlainButton>
            </ProfileBox>
        </Field>
        <SelectField id="start" label="Start" value="Profile Plane">
            <path d="M3 1v14" stroke="#152c44" strokeWidth="2" />
            <path d="M4 8h8M9 5l3 3-3 3" stroke="#152c44" strokeWidth="1.200" fill="none" />
        </SelectField>
        <SelectField id="direction" label="Direction" value="One Side">
            <path d="M2 0l13 6v9H9L2 8z" fill="#f49355" stroke="#222" />
            <path d="M10 7l-8 8" stroke="#000" strokeWidth="1.500" />
            <path d="M0 16v-6l6 6z" />
        </SelectField>
        <SelectField id="extent" label="Extent" value="Distance">
            <path d="M1 1v14M15 1v14" stroke="#152c44" strokeWidth="2" />
            <path d="M3 8h10M5.500 5.500L3 8l2.500 2.500M10.500 5.500L13 8l-2.500 2.500" stroke="#152c44" fill="none" />
        </SelectField>
        <ValueField id="distance" label="Distance" value="-16 mm" />
        <ValueField id="taper" label="Taper Angle" value="0.0 deg" />
        <Separator />
        <SelectField id="operation" label="Operation" value="Cut">
            <path d="M.5 7.500h15v8H.5z" fill="#4d93cf" stroke="#14324d" />
            <path d="M3.500.500h9v10h-9z" fill="#fff" stroke="#111" />
            <path d="M4 7h8" stroke="#bbb" />
        </SelectField>
        <Expander type="button">
            <svg width="6" height="9" viewBox="0 0 6 9">
                <path d="M0 0l6 4.500L0 9z" fill="#222" />
            </svg>
            Objects To Cut
        </Expander>
        <DialogFooter>
            <svg width="12" height="12" viewBox="0 0 12 12">
                <circle cx="6" cy="6" r="6" />
                <path d="M6 2v2M4.500 5.500H6V9M4 9.500h4" stroke="#fff" strokeWidth="1.500" fill="none" />
            </svg>
            <button type="submit">OK</button>
            <button type="button">Cancel</button>
        </DialogFooter>
    </Dialog>
)

const Navigation = () => (
    <NavBar>
        <PlainButton $gap={4} aria-label="Orbit">
            <svg width="17" height="16" viewBox="0 0 17 16" fill="none" stroke="#444">
                <ellipse cx="8" cy="8" rx="3" ry="7.500" />
                <path d="M5 5Q0 6 1 8.500 4 12 10 11M11 5q5 1 5 3.500-1 2-3 2.500" />
                <path d="M12 13l-3-2 3-2zM10 5l3-3v4z" fill="#333" />
                <path d="M5.500 8h5M8 5.500v5" stroke="#0696d7" strokeWidth="1.500" />
            </svg>
            <Caret />
        </PlainButton>
        <PlainButton aria-label="Look at">
            <svg width="16" height="16" viewBox="0 0 16 16">
                <path d="M2 5l6-4-1 2h6l-1 2" fill="#999" stroke="#444" />
                <path d="M.5 5.500h15v10H.5z" fill="#f8f8f8" stroke="#333" />
                <path d="M3.500 8.500h9v4h-9z" fill="#b9c9e4" stroke="#333" />
            </svg>
        </PlainButton>
        <PlainButton aria-label="Pan">
            <svg width="20" height="17" viewBox="0 0 20 17">
                <path
                    d="M7 16l-5-6q0-2 4 1L3 5q0-2 2-1l3 4-2-6q1-2 2-1l2 6 0-6q1-1 2 0v7l2-5q2-1 2 1l-2 6-2 6z"
                    fill="#fff"
                    stroke="#333"
                />
            </svg>
        </PlainButton>
        <PlainButton aria-label="Zoom">
            <svg width="17" height="16" viewBox="0 0 17 16">
                <circle cx="5.500" cy="6.500" r="4.500" fill="#e7eef5" stroke="#666" />
                <path d="M9 10l5 5" stroke="#333" strokeWidth="2.500" />
                <path d="M12 3.500h5M14.500 1v5M12 8.500h5" stroke="#333" />
            </svg>
        </PlainButton>
        <PlainButton $gap={4} aria-label="Fit">
            <svg width="17" height="16" viewBox="0 0 17 16">
                <circle cx="6.500" cy="6.500" r="6" fill="#f4f4f4" stroke="#555" />
                <path d="M4 4h5v5H4z" fill="#ccd" stroke="#555" />
                <path d="M11 11l5 4.500" stroke="#333" strokeWidth="2.500" />
            </svg>
            <Caret />
        </PlainButton>
        <PlainButton $gap={1} aria-label="Display settings">
            <svg width="17" height="16" viewBox="0 0 17 16">
                <path d="M1.500.500h15v12h-15z" fill="#eee" stroke="#333" />
                <path d="M3.500 2.500h11v8h-11z" fill="#a9c3ea" stroke="#2a4a80" />
                <path d="M6.500 13v2.500h5V13" fill="none" stroke="#333" />
            </svg>
            <Caret />
        </PlainButton>
        <PlainButton $gap={1} aria-label="Grid and snaps">
            <svg width="16" height="16" viewBox="0 0 16 16">
                <path d="M0 0h16v16H0z" fill="#f6f6f6" />
                <path d="M0 8h16v8H0z" fill="#cfd2d8" />
                <path d="M.5.500h15v15H.5zM.5 3.500h15M.5 6.500h15M.5 9.500h15M.5 12.500h15M3.500.500v15M6.500.500v15M9.500.500v15M12.500.500v15" stroke="#555" strokeWidth=".7" fill="none" />
            </svg>
            <Caret />
        </PlainButton>
        <PlainButton $gap={2} aria-label="Viewports">
            <svg width="15" height="14" viewBox="0 0 15 14">
                <path d="M.5.500h14v13H.5z" fill="#a3c1ec" stroke="#2c4470" />
                <path d="M7.500 0v14M0 7h15" stroke="#2c4470" strokeWidth="1.500" />
                <path d="M3 2.500h2.500v2H3zM10 2.500h2.500v2H10zM3 9.500h2.500v2H3zM10 9.500h2.500v2H10z" fill="#cfe0f8" stroke="#4a6da3" strokeWidth=".7" />
            </svg>
            <Caret />
        </PlainButton>
    </NavBar>
)

const Player = () => (
    <Transport>
        {[
            ["Go to start", "M2 0h2v14H2zM14 1v12L4 7z"],
            ["Step back", "M11 1v12L1 7zM12 4h2v6h-2z"],
            ["Play", "M2 0l12 7-12 7z"],
            ["Step forward", "M4 1v12l10-6zM1 4h2v6H1z"],
            ["Go to end", "M12 0h2v14h-2zM2 1v12l10-6z"],
        ].map(([label, d]) => (
            <PlainButton key={label} aria-label={label}>
                <svg width="16" height="14" viewBox="0 0 16 14">
                    <path d={d} fill="#444" />
                </svg>
            </PlainButton>
        ))}
    </Transport>
)

const App = () => {
    const dimension = useRef(null)

    useEffect(() => {
        dimension.current.focus()
        dimension.current.select()
    }, [])

    return (
        <Page>
            <GlobalStyle />
            <Header />
            <Tabs />
            <Toolbar />
            <Viewport>
                <Scene viewBox="0 137 1355 541" preserveAspectRatio="xMidYMid slice">
                    <GridLines />
                    <Model />
                    <ViewCube />
                </Scene>
                <Docks>
                    <Browser />
                    <EditFeature />
                </Docks>
                <DimensionBox>
                    <i />
                    <input ref={dimension} aria-label="Distance value" defaultValue="-16 mm" />
                    <Caret />
                </DimensionBox>
                <Hint role="tooltip">
                    Specify distance, or select coplanar profiles/faces to modify the selection
                </Hint>
                <BottomDock>
                    <PanelBar $docked>
                        <ArrowSlot />
                        <span>COMMENTS</span>
                        <PlainButton aria-label="Expand comments">
                            <RoundSign plus />
                        </PlainButton>
                        <Grip />
                    </PanelBar>
                    <Navigation />
                    <Status>1 Profile | Area : 7585.00 mm^2</Status>
                </BottomDock>
            </Viewport>
            <Timeline>
                <Player />
                <Track>
                    <Features>
                        {[...features].map((key, i) => (
                            <li key={i}>
                                <Feature $current={i === current} $later={i > current + 1} aria-label={short[key]}>
                                    <CommandIcon name={short[key]} size={16} />
                                </Feature>
                            </li>
                        ))}
                    </Features>
                    <Rail />
                </Track>
                <Marker width="12" height="33" viewBox="0 0 12 33">
                    <path d="M1 0h10v5L7 9v24H5V9L1 5z" fill="#5a5a5a" />
                </Marker>
                <SettingsButton aria-label="Timeline settings">
                    <Gear />
                </SettingsButton>
            </Timeline>
        </Page>
    )
}

export default App
